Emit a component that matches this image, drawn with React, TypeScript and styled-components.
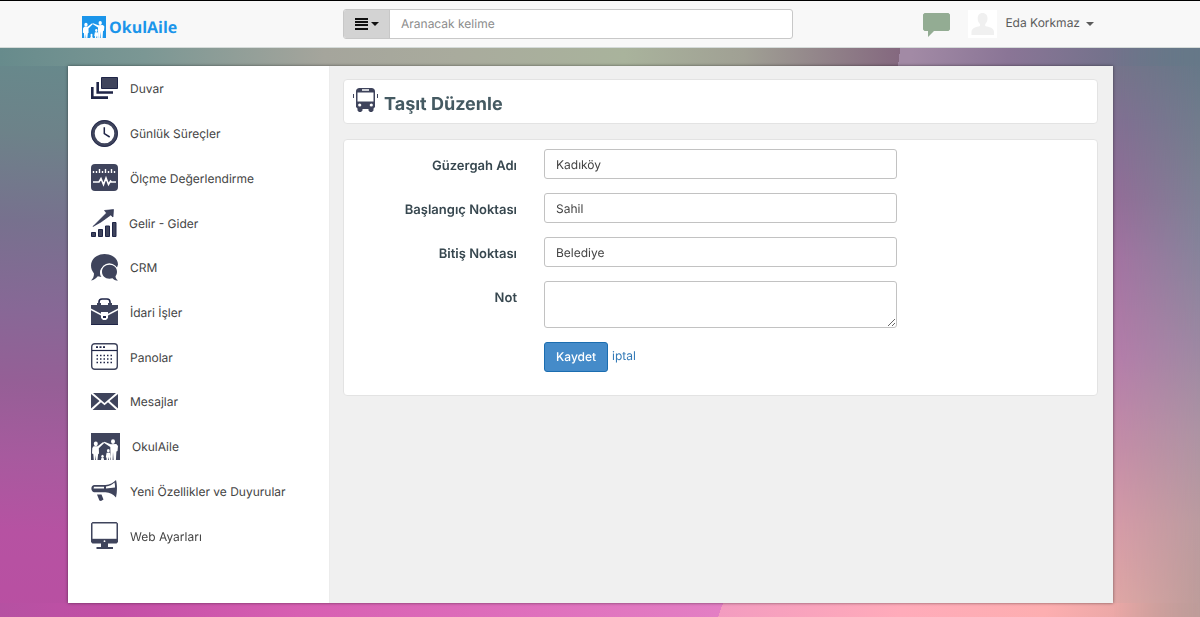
import React from "react";
import styled, { createGlobalStyle } from "styled-components";

const INK = "#3f445c";
const NAVY = "#1f2547";

const GlobalStyle = createGlobalStyle`
  *, *::before, *::after { box-sizing: border-box; }
  html { background: #7f6890; }
  body {
    margin: 0;
    min-height: 100vh;
    font-family: Inter, "Liberation Sans", sans-serif;
    font-size: 12px;
    line-height: 18px;
    color: #444;
    text-rendering: geometricPrecision;
  }
  input, textarea, button { font: inherit; text-rendering: inherit; }
  svg { display: block; flex: none; }
`;

const Backdrop = styled.div`
  position: fixed;
  inset: 0;
  z-index: -1;
  background:
    linear-gradient(97deg, #84687f00 0 75%, #a28aa5 75% 76%, #8a7596 84%, #75728c 92%, #657888 100%) 0 0 / 100% 66px no-repeat,
    linear-gradient(90deg, #678b8c 0, #7b9794 12%, #a5a59c 27%, #a9ab9d 38%, #a9b39c 52%, #a0a094 62%, #84687f 75%, #84687f 100%) 0 0 / 100% 66px no-repeat,
    linear-gradient(110deg, #b551a2 0, #c34fa6 10%, #d75fb2 25%, #df70bd 45%, #e37fc4 60%, #f39cc0 60%, #ffabba 75%, #fdaeb0 87%, #e8a7a5 94%, #d3a09c 100%) 0 100% / 100% 14px no-repeat,
    linear-gradient(184deg, #668a8c 8%, #6d8289 22%, #77718e 36%, #876896 50%, #955f96 62%, #a75a9e 74%, #b652a2 86%, #b94fa2 100%) 0 0 / 68px 100% no-repeat,
    linear-gradient(180deg, #75748a 10%, #826f93 20%, #936d98 32%, #a473a2 42%, #b57daa 58%, #c58ca8 72%, #d69ba8 85%, #e3aaa6 100%) 100% 0 / 87px 100% no-repeat;

  &::after {
    content: "";
    position: absolute;
    inset: 0 0 0 auto;
    width: 87px;
    background: linear-gradient(#667888 10%, #757d8e 24%, #85839a 40%, #9c88a2 56%, #ad93a3 70%, #bb9b9f 85%, #bd9c99 100%);
    mask-image: linear-gradient(90deg, transparent, #000);
  }
`;

const Header = styled.header`
  display: grid;
  grid-template-columns: 261px minmax(0, 450px) 1fr;
  align-items: center;
  height: 48px;
  padding: 0 106px 0 82px;
  background: #f8f8f8;
  border-top: 1px solid #000;
  border-bottom: 1px solid #d5dbd9;
`;

const Logo = styled.a`
  display: flex;
  align-items: center;
  gap: 3px;
  padding-top: 5px;
  color: #1b95ea;
  font: bold 16px/22px "Open Sans", "Noto Sans", sans-serif;
  text-decoration: none;
`;

const Search = styled.form`
  display: flex;
  height: 30px;
  border: 1px solid #c8c8c8;
  border-radius: 3px;
  background: #fff;
  overflow: hidden;
`;

const FilterButton = styled.button`
  display: flex;
  align-items: center;
  justify-content: center;
  gap: 3px;
  width: 46px;
  padding: 0;
  border: 0;
  border-right: 1px solid #c8c8c8;
  background: #d3d3d3;
`;

const SearchInput = styled.input`
  flex: 1;
  min-width: 0;
  padding: 0 11px;
  border: 0;
  outline: 0;
  background: none;
  color: #444;
  &::placeholder { color: #8c8c8c; opacity: 1; }
`;

const UserArea = styled.div`
  display: flex;
  align-items: center;
  justify-content: flex-end;
`;

const PlainButton = styled.button`
  display: flex;
  align-items: center;
  padding: 0;
  border: 0;
  background: none;
  color: #5b5b5b;
  white-space: nowrap;
`;

const ChatButton = styled(PlainButton)`
  margin-right: 18px;
  padding-top: 2px;
`;

const UserName = styled.span`
  margin: 0 6px 2px 8px;
`;

const Shell = styled.div`
  display: grid;
  grid-template-columns: 262px minmax(0, 1fr);
  min-height: calc(100vh - 80px);
  margin: 18px 87px 14px 68px;
  background: #f0f0f0;
  box-shadow: 0 0 3px rgba(0, 0, 0, 0.5);
`;

const Sidebar = styled.nav`
  padding: 0 0 45px 23px;
  background: #fff;
  border-right: 1px solid #ececec;
`;

const NavList = styled.ul`
  display: grid;
  grid-auto-rows: 1fr;
  height: 100%;
  margin: 0;
  padding: 0;
  list-style: none;
`;

const NavLink = styled.a`
  display: flex;
  align-items: center;
  gap: 12px;
  height: 100%;
  color: #444;
  text-decoration: none;
`;

const NavText = styled.span`
  padding-top: 2px;
`;

const Main = styled.main`
  display: flex;
  flex-direction: column;
  gap: 15px;
  padding: 13px 15px 13px 13px;
`;

const Card = styled.section`
  background: #fff;
  border: 1px solid #e3e3e3;
  border-radius: 4px;
`;

const TitleCard = styled(Card)`
  display: flex;
  gap: 6px;
  height: 45px;
  padding: 8px 9px;
`;

const Title = styled.h1`
  margin: 0;
  padding-top: 4px;
  color: #455a62;
  font-size: 18px;
  font-weight: 700;
  line-height: 25px;
`;

const EditForm = styled.form`
  display: grid;
  grid-template-columns: 173px minmax(0, 353px);
  gap: 14px 27px;
  padding: 9px 0 23px;
`;

const Label = styled.label`
  padding-top: 8px;
  color: #37474f;
  font-size: 13px;
  font-weight: 600;
  text-align: right;
`;

const TextInput = styled.input`
  width: 100%;
  height: 30px;
  padding: 0 11px;
  border: 1px solid #c2c2c2;
  border-radius: 3px;
  background: #fff;
  color: #444;
`;

const NoteArea = styled.textarea`
  display: block;
  width: 100%;
  height: 47px;
  padding: 5px 11px;
  border: 1px solid #c2c2c2;
  border-radius: 3px;
  background: #fff;
  color: #444;
  resize: vertical;
`;

const Actions = styled.div`
  grid-column: 2;
  display: flex;
  align-items: flex-start;
  gap: 4px;
`;

const SaveButton = styled.button`
  height: 30px;
  padding: 0 11px;
  border: 1px solid #1b6db0;
  border-radius: 3px;
  background: #458bc9;
  color: #fff;
  font-weight: 500;
`;

const CancelLink = styled.a`
  padding-top: 5px;
  color: #337ab7;
  text-decoration: none;
`;

const Caret = ({ color }: { color: string }) => (
  <svg width="8" height="4" viewBox="0 0 8 4" aria-hidden="true">
    <path d="M0 0h8L4 4z" fill={color} />
  </svg>
);

const FamilyIcon = ({ color, width, height }: { color: string; width: number; height: number }) => (
  <svg width={width} height={height} viewBox="0 0 29 27" preserveAspectRatio="none" aria-hidden="true">
    <path fill={color} d="M0 0h29v27H0z" />
    <g fill="#fff">
      <ellipse cx="4.800" cy="10.800" rx="2" ry="2.400" />
      <path d="M2.600 13.300h4l5.600-4.300 1 .9-5.400 5.300.2 5.300-.9.700L6.500 27H5l-.3-5-.5 5H2.800l-.5-6L1 20.500l.3-5.500z" />
      <ellipse cx="22" cy="8.600" rx="2" ry="2.400" />
      <path d="M19.700 11.200 13.400 8.800l-.6 1 6.500 4.300.3 12.900h2l.4-8 .6 8h2.300l.5-8.500 1.100-.5.500-5-1.700-2z" />
      <ellipse cx="17.300" cy="17.800" rx="1.400" ry="1.800" />
      <path d="M15.600 19.800h3.400l.9 4.500-.8.400V27h-1.200l-.5-3-.5 3h-1.300v-2.300l-.8-.4z" />
      <ellipse cx="11.500" cy="23.300" rx="1.200" ry="1.500" />
      <path d="M10 27c0-3.200 3-3.200 3 0z" />
    </g>
  </svg>
);

const WallIcon = () => (
  <svg width="27" height="22" viewBox="0 0 27 22" aria-hidden="true">
    <path fill={INK} stroke={NAVY} d="M10.500.5h16v11h-16z" />
    <path fill="none" stroke={NAVY} strokeWidth="2.600" d="M6.700 5v10.500H22M1.300 10v10.600H17" />
  </svg>
);

const ClockIcon = () => (
  <svg width="27" height="27" viewBox="0 0 27 27" aria-hidden="true">
    <circle cx="13.5" cy="13.5" r="11.6" fill="none" stroke={INK} strokeWidth="3.6" />
    <circle cx="13.5" cy="13.5" r="13" fill="none" stroke={NAVY} strokeWidth=".8" />
    <path d="M13.3 7.2v6.4l5.4 3.4" fill="none" stroke={NAVY} strokeWidth="1.5" />
  </svg>
);

const MeasureIcon = () => (
  <svg width="27" height="27" viewBox="0 0 27 27" aria-hidden="true">
    <rect width="27" height="27" rx="4" fill={INK} />
    <path stroke="#fff" strokeWidth="1.4" d="M2.5 7v2M5.5 7v2M8.5 5v4M11.5 7v2M14.5 5v4M17.5 7v2M20.5 5v4M23.5 7v2" />
    <path fill="none" stroke="#fff" strokeWidth="1.6" d="M2 18h6l2-3.500 2.500 6L15 14l2.500 6.500 2-3.500 1 1H25" />
  </svg>
);

const GrowthIcon = () => (
  <svg width="26" height="28" viewBox="0 0 26 28" aria-hidden="true">
    <path fill={INK} stroke={NAVY} d="M.5 23.500h4v4h-4zM7.500 20.500h4v7h-4zM14.500 17h4v10.500h-4zM21.500 13.500h3.500v14h-3.500z" />
    <path fill={INK} stroke={NAVY} strokeWidth=".6" d="M2 17.500 15.500 4 13.500 1.500 22.500.5l-.5 7.500-2.300-2L10 13z" />
  </svg>
);

const ChatPairIcon = () => (
  <svg width="27" height="27" viewBox="0 0 27 27" aria-hidden="true">
    <path fill={INK} d="M13.500 0C21 0 27 4.500 27 10.500l-1 3C21 8 9 11.500 9 18.500c0 2 .6 3.500 1.500 4.500l-3.700-.8C5 24.500 3 26 0 26.500c2-2 3-4 3-7C1 17 0 14.500 0 11.500 0 5 6 0 13.500 0z" />
    <circle cx="18.300" cy="17.800" r="8.600" fill="#fff" />
    <path fill={INK} d="M18.500 10.800c4.500 0 7.500 3 7.500 7 0 1.800-.6 3.300-1.500 4.500 0 1.500.8 3 2.500 4.300-2.500 0-4.200-.8-5.500-2.300-6 1.500-10.500-1.500-10.500-6.500 0-4 3-7 7.500-7z" />
  </svg>
);

const BriefcaseIcon = () => (
  <svg width="27" height="27" viewBox="0 0 27 27" aria-hidden="true">
    <path fill="none" stroke={NAVY} strokeWidth="1.600" d="M8 5.500V4c0-2 1-3 3-3h5c2 0 3 1 3 3v1.500" />
    <path fill={INK} d="M0 7h6V5h4v2h7V5h4v2h6v3.500l-10 5.200V14h-7v1.700L0 10.500z" />
    <path fill={INK} d="M0 12.300 10 17.500v2.500l2 2h3l2-2v-2.500l10-5.200V27H0z" />
    <path fill={NAVY} d="M12 18h3v2h-3zM0 26h27v1H0z" />
  </svg>
);

const BoardIcon = () => (
  <svg width="27" height="27" viewBox="0 0 27 27" aria-hidden="true">
    <rect x=".7" y=".7" width="25.600" height="25.600" rx="3" fill="none" stroke={INK} strokeWidth="1.400" />
    <path stroke={NAVY} strokeWidth="1.200" d="M1 7.500h25" />
    <path stroke={NAVY} strokeWidth="1.800" strokeDasharray="2 1.500" d="M5 4.200h9" />
    <path stroke={NAVY} strokeWidth="1.300" strokeDasharray="1.500 2" d="M5.500 12.500h16M5.500 16h16M5.500 19.500h16" />
  </svg>
);

const MailIcon = () => (
  <svg width="27" height="17" viewBox="0 0 27 17" aria-hidden="true">
    <path fill={INK} d="M2 0h23L13.500 10zM0 1l8.500 7L0 15.500zM27 1l-8.500 7 8.500 7.500zM10 9.200l3.500 3 3.500-3 8.500 7.800h-24z" />
  </svg>
);

const MegaphoneIcon = () => (
  <svg width="27" height="21" viewBox="0 0 27 21" aria-hidden="true">
    <path fill={INK} d="M3 5h11.500C19 4.500 22 3 25 0c1.300 5 1.300 12 0 17.500-3-3.500-6-4.800-10.500-5.300H3C-.5 11.700-.5 5.500 3 5z" />
    <path fill="#fff" d="M3 6.800h10v1.700H2.500zM15 6.600c3.500-.5 6-1.800 8.500-4 .5 2 .6 3.500.5 5l-9 .9z" />
    <path fill={INK} d="M6 14.500h4.500l2 5-2.500 1.500c-1.500 0-2-1-2.200-2z" />
  </svg>
);

const MonitorIcon = () => (
  <svg width="27" height="27" viewBox="0 0 27 27" aria-hidden="true">
    <path fill={INK} d="M1.500 0h24L27 1.500V20l-1.500 1.500H17V25h5v2H5.500v-2H10v-3.500H1.500L0 20V1.500z" />
    <path fill="#fff" d="M1.500 1.500h24v15.300h-24z" />
    <circle cx="13.500" cy="19.200" r=".9" fill="#fff" />
  </svg>
);

const BusIcon = () => (
  <svg width="25" height="24" viewBox="0 0 25 24" aria-hidden="true">
    <path fill={INK} d="M6 0h13c2.200.6 3 1.500 3 3.500V19l-1.500 1.500v2L19 24h-2l-1.500-1.500V21h-6v1.500L8 24H6l-1.500-1.500v-2L3 19V3.500C3 1.500 3.800.6 6 0z" />
    <path fill="#fff" d="M4.500 4.500h16v9h-16zM9 1.300h7v1.500H9z" />
    <circle cx="6.700" cy="17" r="1.600" fill="#fff" />
    <circle cx="18.300" cy="17" r="1.600" fill="#fff" />
    <path stroke={INK} d="M.5 6v4M24.500 6v4" />
  </svg>
);

const AvatarIcon = () => (
  <svg width="29" height="28" viewBox="0 0 29 28" aria-hidden="true">
    <path fill="#fff" d="M0 0h29v28H0z" />
    <path fill="#f0f0f0" d="M14.500 3c3.300 0 5 2.300 5 5.200 0 2.800-1 4.600-2.300 5.800v2c4 1.200 8.800 1.800 8.800 6v3H3.500v-3c0-4.200 4.800-4.800 8.500-6v-2c-1.400-1.200-2.300-3-2.300-5.800C9.700 5.300 11.200 3 14.500 3z" />
  </svg>
);

const navItems = [
  { label: "Duvar", icon: <WallIcon /> },
  { label: "Günlük Süreçler", icon: <ClockIcon /> },
  { label: "Ölçme Değerlendirme", icon: <MeasureIcon /> },
  { label: "Gelir - Gider", icon: <GrowthIcon /> },
  { label: "CRM", icon: <ChatPairIcon /> },
  { label: "İdari İşler", icon: <BriefcaseIcon /> },
  { label: "Panolar", icon: <BoardIcon /> },
  { label: "Mesajlar", icon: <MailIcon /> },
  { label: "OkulAile", icon: <FamilyIcon color={INK} width={29} height={27} /> },
  { label: "Yeni Özellikler ve Duyurular", icon: <MegaphoneIcon /> },
  { label: "Web Ayarları", icon: <MonitorIcon /> },
];

const fields = [
  { id: "route", label: "Güzergah Adı", value: "Kadıköy" },
  { id: "start", label: "Başlangıç Noktası", value: "Sahil" },
  { id: "end", label: "Bitiş Noktası", value: "Belediye" },
];

export default function App() {
  return (
    <>
      <GlobalStyle />
      <Backdrop />
      <Header>
        <Logo href="#">
          <FamilyIcon color="#1b95ea" width={24} height={22} />
          OkulAile
        </Logo>
        <Search role="search" onSubmit={(e) => e.preventDefault()}>
          <FilterButton type="button" aria-label="Filtre">
            <svg width="13" height="12" viewBox="0 0 13 12" aria-hidden="true">
              <path fill="#111" d="M0 0h13v2H0zM0 3h13v2H0zM0 6h13v2H0zM0 10h13v2H0z" />
            </svg>
            <Caret color="#111" />
          </FilterButton>
          <SearchInput type="text" placeholder="Aranacak kelime" aria-label="Aranacak kelime" />
        </Search>
        <UserArea>
          <ChatButton type="button" aria-label="Mesajlar">
            <svg width="27" height="24" viewBox="0 0 27 24" aria-hidden="true">
              <path fill="#93ac93" d="M1.500 0h24L27 1.500v15L25.500 18H11l-6 6v-6H1.500L0 16.500v-15z" />
            </svg>
          </ChatButton>
          <PlainButton type="button">
            <AvatarIcon />
            <UserName>Eda Korkmaz</UserName>
            <Caret color="#5b5b5b" />
          </PlainButton>
        </UserArea>
      </Header>
      <Shell>
        <Sidebar>
          <NavList>
            {navItems.map(({ label, icon }) => (
              <li key={label}>
                <NavLink href="#">
                  {icon}
                  <NavText>{label}</NavText>
                </NavLink>
              </li>
            ))}
          </NavList>
        </Sidebar>
        <Main>
          <TitleCard>
            <BusIcon />
            <Title>Taşıt Düzenle</Title>
          </TitleCard>
          <Card>
            <EditForm onSubmit={(e) => e.preventDefault()}>
              {fields.map(({ id, label, value }) => (
                <React.Fragment key={id}>
                  <Label htmlFor={id}>{label}</Label>
                  <TextInput id={id} type="text" defaultValue={value} />
                </React.Fragment>
              ))}
              <Label htmlFor="note">Not</Label>
              <NoteArea id="note" />
              <Actions>
                <SaveButton type="submit">Kaydet</SaveButton>
                <CancelLink href="#">iptal</CancelLink>
              </Actions>
            </EditForm>
          </Card>
        </Main>
      </Shell>
    </>
  );
}
